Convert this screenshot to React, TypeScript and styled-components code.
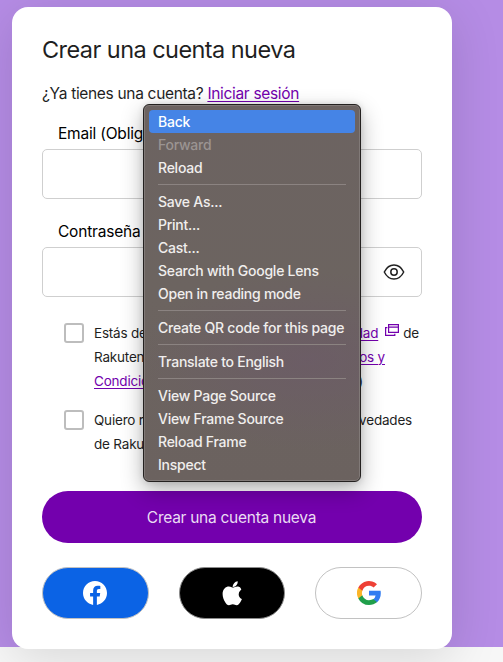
import React from "react";
import styled, { createGlobalStyle } from "styled-components";

const Global = createGlobalStyle`
  *, *::before, *::after { box-sizing: border-box; }
  html, body { margin: 0; padding: 0; }
  body {
    width: 503px; height: 662px; overflow: hidden;
    background: #f7f7f7;
    font-family: Inter, "Liberation Sans", sans-serif;
    color: #1f1f1f;
  }
`;

const Page = styled.div`
  position: relative;
  width: 503px;
  height: 662px;
  padding: 7px 0 0 12px;
  overflow: hidden;
  background: linear-gradient(#b58ce5 0 647px, #f7f7f7 647px);
`;

const Card = styled.main`
  display: flex;
  flex-direction: column;
  width: 440px;
  height: 642px;
  padding: 0 30px;
  background: #fff;
  border-radius: 16px;
  box-shadow: 0 10px 50px rgba(0, 0, 0, 0.13);
`;

const Title = styled.h1`
  margin: 27px 0 0;
  font-size: 23.5px;
  line-height: 32px;
  font-weight: 400;
  letter-spacing: -0.56px;
  white-space: nowrap;
`;

const Intro = styled.p`
  margin: 16px 0 0;
  font-size: 15.5px;
  line-height: 24px;
  letter-spacing: -0.32px;
  white-space: nowrap;
`;

const Link = styled.a`
  color: #7300ad;
  text-decoration: underline;
  text-decoration-thickness: 1px;
  text-underline-offset: 2px;
`;

const Field = styled.div<{ $gap: number }>`
  margin-top: ${(p) => p.$gap}px;
`;

const Label = styled.label`
  display: block;
  height: 24px;
  padding-left: 16px;
  font-size: 15.5px;
  line-height: 26px;
  letter-spacing: -0.2px;
  color: #000;
`;

const Input = styled.div`
  display: flex;
  align-items: center;
  justify-content: flex-end;
  height: 50px;
  margin-top: 4px;
  padding-right: 15px;
  border: 1px solid #cfcfcf;
  border-radius: 5px;
`;

const Consent = styled.div<{ $gap: number }>`
  display: flex;
  gap: 10px;
  margin: ${(p) => p.$gap}px 0 0 22px;
`;

const Checkbox = styled.span`
  flex: none;
  width: 20px;
  height: 20px;
  margin-top: 2px;
  border: 2px solid #bdbdbd;
  border-radius: 3px;
`;

const Lines = styled.div`
  font-size: 13.5px;
  line-height: 24px;
  letter-spacing: -0.2px;
`;

const Line = styled.div<{ $width: number }>`
  display: flex;
  justify-content: space-between;
  width: ${(p) => p.$width}px;
  height: 24px;
  white-space: nowrap;
`;

const WindowIcon = styled.svg`
  margin: 0 4px 0 7px;
  vertical-align: 1px;
`;

const Submit = styled.button`
  flex: none;
  height: 52px;
  margin-top: 35px;
  padding: 1px 1px 0 0;
  border: 0;
  border-radius: 26px;
  background: #7300ad;
  color: #eadcf3;
  font: 400 15.5px/52px Inter, sans-serif;
  letter-spacing: -0.27px;
`;

const Socials = styled.div`
  display: flex;
  justify-content: space-between;
  margin-top: 24px;
`;

const Social = styled.button<{ $bg: string; $shift?: number }>`
  display: flex;
  align-items: center;
  justify-content: center;
  width: 107px;
  height: 52px;
  padding: 0 ${(p) => p.$shift ?? 0}px 0 0;
  border: 1px solid #c2c2c2;
  border-radius: 26px;
  background: ${(p) => p.$bg};
`;

const AppleButton = styled(Social)`
  width: 106px;
  border-color: #8c8c8c;
`;

const Menu = styled.div`
  position: absolute;
  top: 104px;
  left: 143px;
  width: 218px;
  height: 378px;
  padding: 5px;
  border: 1px solid #242120;
  border-radius: 6px;
  background:
    radial-gradient(ellipse 170px 90px at 76% 68%, rgba(108, 90, 104, 0.7), rgba(108, 90, 104, 0)),
    linear-gradient(#6c6361, #6c6460 50%, #6b625f);
  box-shadow: inset 0 0 0 1px #817a78, 0 8px 22px rgba(0, 0, 0, 0.3), 0 0 6px rgba(0, 0, 0, 0.12);
`;

const MenuItem = styled.div<{ $state?: "active" | "disabled" }>`
  height: 23px;
  padding-left: 9px;
  border-radius: 4px;
  background: ${(p) => (p.$state === "active" ? "#4584e6" : "transparent")};
  color: ${(p) => (p.$state === "disabled" ? "#9b9492" : p.$state === "active" ? "#fff" : "#f0eeed")};
  font-size: 14px;
  line-height: 24px;
  font-weight: 500;
  letter-spacing: -0.25px;
  white-space: nowrap;
`;

const Separator = styled.div`
  height: 1px;
  margin: 5px 9px;
  background: #8b8381;
`;

const Eye = () => (
  <svg width="24" height="24" viewBox="0 0 24 24" fill="none" stroke="#222" strokeWidth="1.5">
    <path d="M2.300 12C4.600 7.300 8 5 12 5s7.400 2.300 9.700 7c-2.300 4.700-5.700 7-9.700 7s-7.400-2.300-9.700-7z" strokeLinejoin="round" />
    <circle cx="12" cy="12" r="3.200" />
  </svg>
);

const Facebook = () => (
  <svg width="24" height="24" viewBox="0 0 24 24" fill="#fff">
    <path d="M24 12.073c0-6.627-5.373-12-12-12s-12 5.373-12 12c0 5.990 4.388 10.954 10.125 11.854v-8.385H7.078v-3.470h3.047V9.430c0-3.007 1.792-4.669 4.533-4.669 1.312 0 2.686.235 2.686.235v2.953H15.830c-1.491 0-1.956.925-1.956 1.874v2.250h3.328l-.532 3.470h-2.796v8.385C19.612 23.027 24 18.062 24 12.073z" />
  </svg>
);

const Apple = () => (
  <svg width="22" height="25" viewBox="0 0 22 25" fill="#fff">
    <path d="M20.300 8.700c-.1.100-2.600 1.500-2.600 4.500 0 3.500 3.100 4.800 3.200 4.800 0 .1-.5 1.700-1.600 3.300-1 1.500-2 2.900-3.600 2.900s-2-.9-3.900-.9c-1.800 0-2.400.9-3.900.9s-2.600-1.300-3.700-3C2.800 19.200 1.600 16 1.600 13c0-4.900 3.200-7.500 6.300-7.500 1.700 0 3 1.100 4.100 1.100 1 0 2.500-1.200 4.400-1.200.7 0 3.300.1 3.900 3.300zM15.400 4.300c.8-.9 1.300-2.200 1.300-3.500V.3c-1.200 0-2.700.8-3.600 1.900-.7.8-1.400 2.100-1.400 3.400v.4c1.400.2 2.800-.7 3.700-1.700z" />
  </svg>
);

const Google = () => (
  <svg width="24" height="24" viewBox="0 0 24 24">
    <path fill="#327df1" d="M23.800 12.300c0-.8-.1-1.700-.2-2.500H12v4.700h6.600a5.600 5.600 0 0 1-2.400 3.700v3h3.900c2.300-2.100 3.700-5.200 3.700-8.900z" />
    <path fill="#209f4b" d="M12 24c3.200 0 6-1 8-2.900l-3.900-3c-1 .7-2.400 1.200-4.100 1.200-3.100 0-5.800-2.100-6.700-5H1.300v3.100A12 12 0 0 0 12 24z" />
    <path fill="#fbb528" d="M5.300 14.300a7.200 7.200 0 0 1 0-4.600V6.600h-4a12 12 0 0 0 0 10.800z" />
    <path fill="#ee4036" d="M12 4.800c1.800 0 3.400.6 4.600 1.800L20 3.200A12 12 0 0 0 1.300 6.600l4 3.100c.9-2.900 3.600-4.900 6.700-4.900z" />
  </svg>
);

export default function App() {
  return (
    <>
      <Global />
      <Page>
        <Card>
          <Title>Crear una cuenta nueva</Title>
          <Intro>¿Ya tienes una cuenta? <Link>Iniciar sesión</Link></Intro>
          <Field $gap={15}>
            <Label>Email (Obligatorio)</Label>
            <Input />
          </Field>
          <Field $gap={20}>
            <Label>Contraseña</Label>
            <Input><Eye /></Input>
          </Field>
          <Consent $gap={24}>
            <Checkbox />
            <Lines>
              <Line $width={325}>
                <span>Estás de acuerdo con la</span>
                <span>
                  <Link>Privacidad</Link>
                  <WindowIcon width="14" height="13" viewBox="0 0 14 13" fill="none" stroke="#7300ad" strokeWidth="1.200">
                    <path d="M3.600.6h9.800v7.800H3.600zM3.600 3.200h9.800M2.400 3.600H.6v7.800h9.200V9.800" />
                  </WindowIcon>
                  de
                </span>
              </Line>
              <Line $width={291}>
                <span>Rakuten TV y aceptas</span>
                <Link>Términos y</Link>
              </Line>
              <Line $width={269}>
                <Link>Condiciones</Link>
                <span>)</span>
              </Line>
            </Lines>
          </Consent>
          <Consent $gap={15}>
            <Checkbox />
            <Lines>
              <Line $width={318}>
                <span>Quiero recibir ofertas y</span>
                <span>novedades</span>
              </Line>
              <Line $width={318}>de Rakuten TV</Line>
            </Lines>
          </Consent>
          <Submit>Crear una cuenta nueva</Submit>
          <Socials>
            <Social $bg="#0b63e5" $shift={1}><Facebook /></Social>
            <AppleButton $bg="#000" $shift={1}><Apple /></AppleButton>
            <Social $bg="#fff"><Google /></Social>
          </Socials>
        </Card>
        <Menu>
          <MenuItem $state="active">Back</MenuItem>
          <MenuItem $state="disabled">Forward</MenuItem>
          <MenuItem>Reload</MenuItem>
          <Separator />
          <MenuItem>Save As...</MenuItem>
          <MenuItem>Print...</MenuItem>
          <MenuItem>Cast...</MenuItem>
          <MenuItem>Search with Google Lens</MenuItem>
          <MenuItem>Open in reading mode</MenuItem>
          <Separator />
          <MenuItem>Create QR code for this page</MenuItem>
          <Separator />
          <MenuItem>Translate to English</MenuItem>
          <Separator />
          <MenuItem>View Page Source</MenuItem>
          <MenuItem>View Frame Source</MenuItem>
          <MenuItem>Reload Frame</MenuItem>
          <MenuItem>Inspect</MenuItem>
        </Menu>
      </Page>
    </>
  );
}
